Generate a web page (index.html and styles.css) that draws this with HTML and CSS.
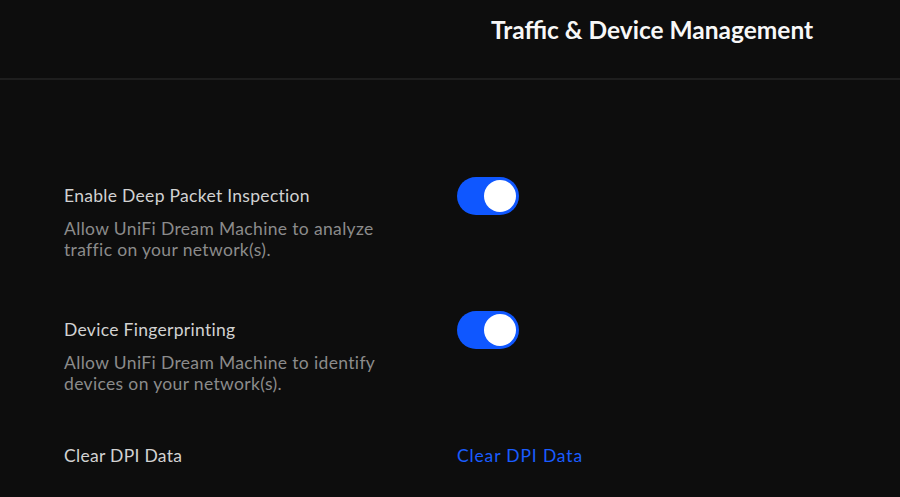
FILE: index.html
```html
<!DOCTYPE html>
<html lang="en">
<head>
<meta charset="utf-8">
<title>Traffic &amp; Device Management</title>
<link rel="stylesheet" href="styles.css">
</head>
<body>
<header class="header">
  <h1 class="title">Traffic &amp; Device Management</h1>
</header>
<main class="content">
  <section class="setting setting-first">
    <div class="label">Enable Deep Packet Inspection</div>
    <div class="control"><span class="toggle"><span class="knob"></span></span></div>
    <p class="desc">Allow UniFi Dream Machine to analyze<br>traffic on your network(s).</p>
  </section>
  <section class="setting setting-second">
    <div class="label">Device Fingerprinting</div>
    <div class="control"><span class="toggle"><span class="knob"></span></span></div>
    <p class="desc">Allow UniFi Dream Machine to identify<br>devices on your network(s).</p>
  </section>
  <section class="setting setting-third">
    <div class="label">Clear DPI Data</div>
    <div class="control"><a class="link" href="#">Clear DPI Data</a></div>
  </section>
</main>
</body>
</html>
```

FILE: styles.css
```css
* { box-sizing: border-box; }
html, body { margin: 0; padding: 0; }
body {
  background: #0d0d0d;
  font-family: Lato, "Open Sans", sans-serif;
  height: 497px;
  overflow: hidden;
}
.header {
  height: 80px;
  border-bottom: 2px solid #1e1e1e;
  padding-left: 491px;
  display: flex;
  align-items: flex-start;
}
.title {
  margin: 0;
  padding-top: 15px;
  font-size: 24.5px;
  font-weight: 700;
  color: #f7f7f7;
  line-height: 30px;
}
.content {
  padding: 97px 0 0 64px;
}
.setting {
  display: grid;
  grid-template-columns: 393px auto;
  grid-template-rows: 38px auto;
  align-items: center;
}
.setting-second { margin-top: 51px; }
.setting-third { margin-top: 43px; }
.label {
  font-size: 17.5px;
  letter-spacing: 0.3px;
  color: #d2d2d2;
  line-height: 22px;
}
.desc {
  grid-column: 1 / 2;
  margin: 3px 0 0;
  font-size: 17.5px;
  letter-spacing: 0.35px;
  line-height: 21px;
  color: #8b8b8b;
}
.control { display: flex; align-items: center; }
.toggle {
  width: 62px;
  height: 38px;
  border-radius: 19px;
  background: #0f57ff;
  display: flex;
  align-items: center;
  justify-content: flex-end;
  padding-right: 3px;
}
.knob {
  width: 32px;
  height: 32px;
  border-radius: 50%;
  background: #ffffff;
}
.link {
  color: #1a5cff;
  text-decoration: none;
  font-size: 17.5px;
  letter-spacing: 0.85px;
  line-height: 22px;
}
```
